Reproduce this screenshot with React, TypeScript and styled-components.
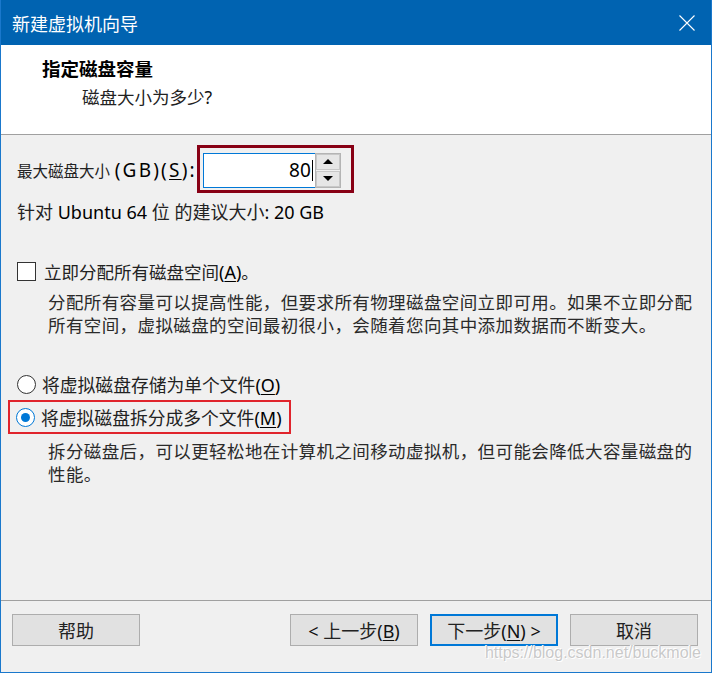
import React from "react";
import styled, { createGlobalStyle } from "styled-components";

const UI = `"Segoe UI", "Noto Sans", "Noto Sans CJK SC", sans-serif`;
const CJK = `"Noto Sans CJK SC", "Noto Sans", sans-serif`;

const GlobalStyle = createGlobalStyle`
  html, body { margin: 0; padding: 0; background: #ffffff; }
  body { font-family: ${UI}; }
`;

const Window = styled.div`
  position: relative;
  width: 712px;
  height: 673px;
  box-sizing: border-box;
  border: 1px solid #1a78cc;
  border-top: none;
  display: flex;
  flex-direction: column;
  background: #f0f0f0;
  font-family: ${UI};
  color: #000;
  overflow: hidden;
`;

const TitleBar = styled.div`
  height: 45px;
  flex: none;
  background: #0063b1;
  display: flex;
  align-items: center;
  justify-content: space-between;
  padding: 0 16px 0 11px;
  color: #ffffff;
  font-family: ${CJK};
  font-size: 18px;
`;

const CloseIcon = styled.svg`
  width: 16px;
  height: 16px;
  display: block;
`;

const Header = styled.div`
  height: 89px;
  flex: none;
  background: #ffffff;
  border-bottom: 1px solid #a0a0a0;
`;

const HeaderTitle = styled.div`
  margin-top: 11px;
  padding-left: 41px;
  font-family: ${CJK};
  font-weight: 700;
  font-size: 18.5px;
  line-height: 24px;
`;

const HeaderSub = styled.div`
  margin-top: 5px;
  padding-left: 81px;
  font-size: 17.5px;
  line-height: 24px;
  color: #111;
`;

const Body = styled.div`
  flex: 1;
  padding: 9px 0 0 16px;
  display: flex;
  flex-direction: column;
  align-items: flex-start;
`;

const SizeRow = styled.div`
  display: flex;
  align-items: center;
  height: 49px;
`;

const FieldLabel = styled.label`
  margin-top: 3px;
  font-size: 18px;
  line-height: 24px;
  white-space: nowrap;
`;

const Cjk = styled.span<{ $size?: number }>`
  font-family: ${CJK};
  font-size: ${(p) => p.$size ?? 16}px;
  color: #222;
`;

const Wide = styled.span`
  font-size: 19px;
  letter-spacing: 2.2px;
`;

const U = styled.span`
  text-decoration: underline;
  text-underline-offset: 2px;
`;

const SpinFrame = styled.div`
  display: flex;
  margin-left: 0;
  border: 3px solid #880015;
  padding: 5px 10px 2px 3px;
`;

const NumberBox = styled.div`
  box-sizing: border-box;
  width: 112px;
  height: 35px;
  background: #ffffff;
  border: 1px solid #0078d7;
  border-right: none;
  display: flex;
  align-items: center;
  justify-content: flex-end;
  padding-right: 2px;
  font-size: 19px;
`;

const Caret = styled.span`
  display: inline-block;
  width: 1px;
  height: 21px;
  background: #000;
  margin-left: 1px;
`;

const Spinner = styled.div`
  width: 26px;
  height: 35px;
  box-sizing: border-box;
  display: grid;
  grid-template-rows: 1fr 1fr;
  gap: 1px;
  background: #f0f0f0;
  border: 1px solid #b4b4b4;
`;

const SpinButton = styled.div<{ $down?: boolean }>`
  background: #e6e6e6;
  border: 1px solid #c8c8c8;
  display: flex;
  align-items: center;
  justify-content: center;
  &::after {
    content: "";
    width: 0;
    height: 0;
    border-left: 5px solid transparent;
    border-right: 5px solid transparent;
    ${(p) =>
      p.$down
        ? "border-top: 5px solid #000;"
        : "border-bottom: 5px solid #000;"}
  }
`;

const InfoLine = styled.div`
  margin-top: 6px;
  font-size: 18px;
  line-height: 24px;
  white-space: nowrap;
`;

const OptionRow = styled.div<{ $top: number }>`
  display: flex;
  align-items: center;
  height: 24px;
  margin-top: ${(p) => p.$top}px;
`;

const CheckBox = styled.span`
  box-sizing: border-box;
  width: 19px;
  height: 19px;
  background: #ffffff;
  border: 1px solid #333333;
  flex: none;
`;

const Radio = styled.span<{ $on?: boolean }>`
  box-sizing: border-box;
  width: 19px;
  height: 19px;
  border-radius: 50%;
  background: #ffffff;
  border: 1px solid ${(p) => (p.$on ? "#0078d7" : "#333333")};
  flex: none;
  display: flex;
  align-items: center;
  justify-content: center;
  &::after {
    content: "";
    width: 9px;
    height: 9px;
    border-radius: 50%;
    background: ${(p) => (p.$on ? "#0078d7" : "transparent")};
  }
`;

const OptionLabel = styled.span<{ $gap: number }>`
  margin-left: ${(p) => p.$gap}px;
  font-size: 18px;
  white-space: nowrap;
`;

const Desc = styled.div<{ $top: number }>`
  margin-top: ${(p) => p.$top}px;
  padding-left: 31px;
  font-family: ${CJK};
  font-size: 17.5px;
  letter-spacing: 0.4px;
  line-height: 23px;
  color: #2a2a2a;
  white-space: nowrap;
`;

const Highlight = styled.div`
  margin-top: 4px;
  margin-left: -9px;
  display: flex;
  align-items: center;
  height: 30px;
  border: 2px solid #e0242c;
  padding: 0 7px 0 6px;
`;

const Footer = styled.div`
  height: 58px;
  flex: none;
  border-top: 1px solid #a0a0a0;
  padding: 13px 13px 0 11px;
  display: flex;
  justify-content: space-between;
  align-items: flex-start;
`;

const ButtonGroup = styled.div`
  display: flex;
  gap: 12px;
`;

const Button = styled.button<{ $primary?: boolean }>`
  box-sizing: border-box;
  width: 128px;
  height: 32px;
  margin: 0;
  padding: 0;
  background: #e1e1e1;
  border: ${(p) => (p.$primary ? "2px solid #0078d7" : "1px solid #adadad")};
  font-family: ${UI};
  font-size: 18px;
  color: #111;
  white-space: nowrap;
  line-height: 28px;
  text-align: center;
`;

const Watermark = styled.div`
  position: absolute;
  right: 10px;
  bottom: 10px;
  font-family: "Liberation Sans", Arial, sans-serif;
  font-size: 16px;
  line-height: 18px;
  color: #c9c9c9;
  text-shadow: 0 0 1px #fff, 0 0 1px #fff, 1px 1px 0 #fff, -1px -1px 0 #fff;
  pointer-events: none;
`;

export default function App() {
  return (
    <>
      <GlobalStyle />
      <Window>
        <TitleBar>
          <span>新建虚拟机向导</span>
          <CloseIcon viewBox="0 0 16 16">
            <path d="M0.5 0.5 L15.5 15.5 M15.5 0.5 L0.5 15.5" stroke="#fff" strokeWidth="1.1" fill="none" />
          </CloseIcon>
        </TitleBar>
        <Header>
          <HeaderTitle>指定磁盘容量</HeaderTitle>
          <HeaderSub>
            <Cjk $size={17.5}>磁盘大小为多少</Cjk>?
          </HeaderSub>
        </Header>
        <Body>
          <SizeRow>
            <FieldLabel>
              <Cjk $size={15.5}>最大磁盘大小</Cjk>{" "}
              <Wide>
                (GB)(<U>S</U>):
              </Wide>
            </FieldLabel>
            <SpinFrame>
              <NumberBox>
                80<Caret />
              </NumberBox>
              <Spinner>
                <SpinButton />
                <SpinButton $down />
              </Spinner>
            </SpinFrame>
          </SizeRow>
          <InfoLine>
            <Cjk $size={18}>针对</Cjk> Ubuntu 64 <Cjk $size={18}>位</Cjk>{" "}
            <Cjk $size={18}>的建议大小</Cjk>: 20 GB
          </InfoLine>
          <OptionRow $top={35}>
            <CheckBox />
            <OptionLabel $gap={8}>
              <Cjk $size={17.5}>立即分配所有磁盘空间</Cjk>(<U>A</U>)<Cjk $size={17.5}>。</Cjk>
            </OptionLabel>
          </OptionRow>
          <Desc $top={7}>
            分配所有容量可以提高性能，但要求所有物理磁盘空间立即可用。如果不立即分配
            <br />
            所有空间，虚拟磁盘的空间最初很小，会随着您向其中添加数据而不断变大。
          </Desc>
          <OptionRow $top={36}>
            <Radio />
            <OptionLabel $gap={6}>
              <Cjk $size={17.8}>将虚拟磁盘存储为单个文件</Cjk>(<U>O</U>)
            </OptionLabel>
          </OptionRow>
          <Highlight>
            <Radio $on />
            <OptionLabel $gap={6}>
              <Cjk $size={17.8}>将虚拟磁盘拆分成多个文件</Cjk>(<U>M</U>)
            </OptionLabel>
          </Highlight>
          <Desc $top={5}>
            拆分磁盘后，可以更轻松地在计算机之间移动虚拟机，但可能会降低大容量磁盘的
            <br />
            性能。
          </Desc>
        </Body>
        <Footer>
          <Button>
            <Cjk $size={18}>帮助</Cjk>
          </Button>
          <ButtonGroup>
            <Button>
              &lt; <Cjk $size={18}>上一步</Cjk>(<U>B</U>)
            </Button>
            <Button $primary>
              <Cjk $size={18}>下一步</Cjk>(<U>N</U>) &gt;
            </Button>
            <Button>
              <Cjk $size={18}>取消</Cjk>
            </Button>
          </ButtonGroup>
        </Footer>
        <Watermark>https://blog.csdn.net/buckmole</Watermark>
      </Window>
    </>
  );
}
